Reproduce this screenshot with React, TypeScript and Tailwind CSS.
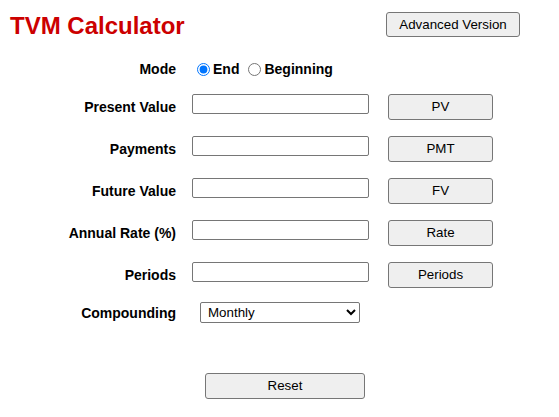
import { useState } from "react";

const rows = [
  { label: "Present Value", action: "PV" },
  { label: "Payments", action: "PMT" },
  { label: "Future Value", action: "FV" },
  { label: "Annual Rate (%)", action: "Rate" },
  { label: "Periods", action: "Periods" },
];

const btn =
  "border border-[#767676] rounded-[3px] bg-[#efefef] text-[13.333px] text-black leading-none";

export default function App() {
  const [mode, setMode] = useState("end");
  const [values, setValues] = useState<Record<string, string>>({});

  return (
    <div className="min-h-[417px] w-full bg-white text-black font-['Liberation_Sans',Arial,sans-serif]">
      {/* Title bar */}
      <header className="flex items-start justify-between pl-[10px] pr-[39px] pt-[12px]">
        <h1 className="text-[24px] leading-[28px] font-bold text-[#cc0000]">TVM Calculator</h1>
        <button className={`${btn} w-[134px] h-[25px]`}>Advanced Version</button>
      </header>

      <div className="mt-[16px] flex flex-col">
        {/* Mode */}
        <div className="flex h-[26px] items-center">
          <span className="w-[176px] text-right text-[14px] leading-[26px] font-bold">Mode</span>
          <div className="ml-[16px] flex items-center text-[14px] font-bold">
            <input
              type="radio"
              name="mode"
              checked={mode === "end"}
              onChange={() => setMode("end")}
              className="ml-[5px] mr-[3px] w-[13px] h-[13px]"
            />
            <span>End</span>
            <input
              type="radio"
              name="mode"
              checked={mode === "begin"}
              onChange={() => setMode("begin")}
              className="ml-[9px] mr-[3px] w-[13px] h-[13px]"
            />
            <span>Beginning</span>
          </div>
        </div>

        {/* Value rows */}
        <div className="mt-[12px] flex flex-col gap-[16px]">
          {rows.map((r) => (
            <div key={r.action} className="flex h-[26px] items-start">
              <span className="w-[176px] text-right text-[14px] leading-[26px] font-bold">{r.label}</span>
              <input
                type="text"
                value={values[r.action] ?? ""}
                onChange={(e) => setValues({ ...values, [r.action]: e.target.value })}
                className="ml-[16px] w-[177px] h-[20px] border border-[#767676] rounded-[2px] bg-white px-[2px] text-[13.333px]"
              />
              <button className={`${btn} ml-[19px] w-[105px] h-[26px]`}>{r.action}</button>
            </div>
          ))}
        </div>

        {/* Compounding */}
        <div className="mt-[12px] flex h-[26px] items-start">
          <span className="w-[176px] text-right text-[14px] leading-[26px] font-bold">Compounding</span>
          <select
            defaultValue="Monthly"
            className="ml-[24px] mt-[2px] w-[160px] h-[21px] border border-[#767676] rounded-[2px] bg-white pl-[3px] text-[13.333px]"
          >
            <option>Annually</option>
            <option>Semi-Annually</option>
            <option>Quarterly</option>
            <option>Monthly</option>
            <option>Daily</option>
          </select>
        </div>

        <div className="mt-[47px] pl-[205px]">
          <button className={`${btn} w-[160px] h-[26px]`}>Reset</button>
        </div>
      </div>
    </div>
  );
}
